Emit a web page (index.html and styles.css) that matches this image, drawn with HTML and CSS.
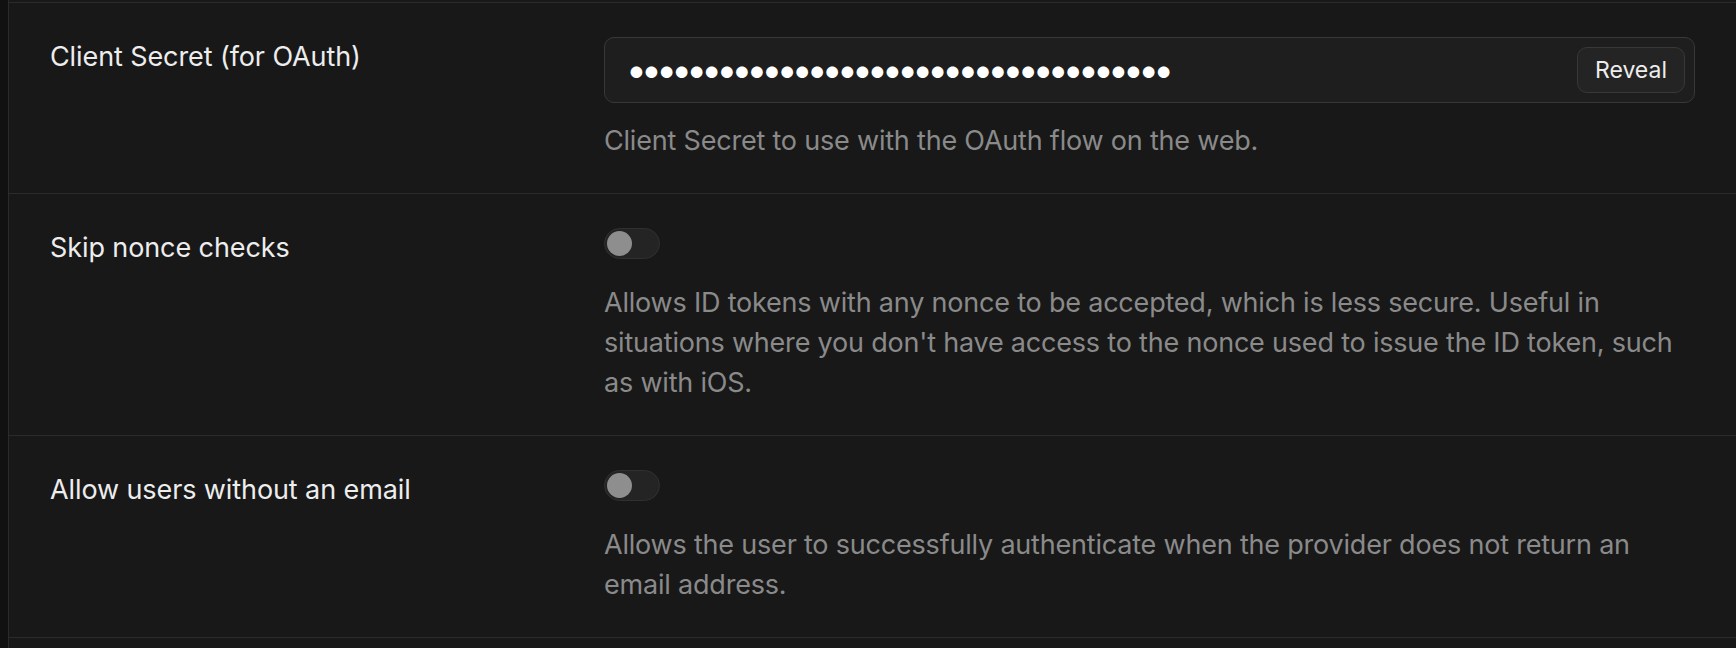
FILE: index.html
```html
<!DOCTYPE html>
<html lang="en">
<head>
<meta charset="utf-8">
<title>Provider settings</title>
<link rel="stylesheet" href="styles.css">
</head>
<body>
<div class="shell">
  <section class="panel">
    <div class="row">
      <div class="label">Client Secret (for OAuth)</div>
      <div class="control">
        <div class="secret-field">
          <span class="dots">••••••••••••••••••••••••••••••••••••</span>
          <button class="reveal" type="button">Reveal</button>
        </div>
        <p class="desc">Client Secret to use with the OAuth flow on the web.</p>
      </div>
    </div>
    <div class="row">
      <div class="label">Skip nonce checks</div>
      <div class="control">
        <button class="toggle" type="button" aria-pressed="false"><span class="knob"></span></button>
        <p class="desc after-toggle">Allows ID tokens with any nonce to be accepted, which is less secure. Useful in situations where you don't have access to the nonce used to issue the ID token, such as with iOS.</p>
      </div>
    </div>
    <div class="row">
      <div class="label">Allow users without an email</div>
      <div class="control">
        <button class="toggle" type="button" aria-pressed="false"><span class="knob"></span></button>
        <p class="desc after-toggle">Allows the user to successfully authenticate when the provider does not return an email address.</p>
      </div>
    </div>
    <div class="row row-next"></div>
  </section>
</div>
</body>
</html>
```

FILE: styles.css
```css
* { box-sizing: border-box; }

html, body {
  margin: 0;
  padding: 0;
  background: #111111;
  height: 100%;
  overflow: hidden;
}

body {
  font-family: "Inter", "Liberation Sans", sans-serif;
  font-size: 27px;
  line-height: 40px;
  color: #ededed;
}

.shell {
  padding-left: 8px;
  height: 100%;
}

.panel {
  background: #181818;
  border-left: 1px solid #2b2b2b;
  height: 100%;
  padding-top: 2px;
}

.row {
  display: grid;
  grid-template-columns: 554px 1fr;
  border-top: 1px solid #2b2b2b;
  padding: 34px 41px 32px 41px;
}

.row-next {
  padding: 0;
  height: 20px;
}

.label {
  color: #ededed;
  font-weight: 400;
  letter-spacing: -0.1px;
}

.control {
  display: flex;
  flex-direction: column;
  align-items: flex-start;
}

.secret-field {
  width: 100%;
  height: 66px;
  display: flex;
  align-items: center;
  justify-content: space-between;
  background: #1e1e1e;
  border: 1px solid #383838;
  border-radius: 10px;
  padding: 0 9px 0 21px;
}

.dots {
  font-family: "Inter", sans-serif;
  font-size: 37px;
  letter-spacing: -5.75px;
  color: #ffffff;
  line-height: 1;
  white-space: nowrap;
  padding-bottom: 1px;
}

.reveal {
  height: 46px;
  padding: 0 17px;
  border-radius: 10px;
  border: 1px solid #383838;
  background: #242424;
  color: #ededed;
  font-family: "Inter", sans-serif;
  font-size: 23px;
  line-height: 1;
}

.desc {
  margin: 18px 0 0 0;
  color: #8a8a8a;
  font-size: 27px;
  line-height: 40px;
  letter-spacing: -0.2px;
}

.desc.after-toggle {
  margin-top: 24px;
}

.toggle {
  position: relative;
  width: 56px;
  height: 31px;
  padding: 0;
  border-radius: 16px;
  border: 1px solid #303030;
  background: #242424;
}

.knob {
  position: absolute;
  left: 2px;
  top: 2px;
  width: 25px;
  height: 25px;
  border-radius: 50%;
  background: #8e8e8e;
}
```
